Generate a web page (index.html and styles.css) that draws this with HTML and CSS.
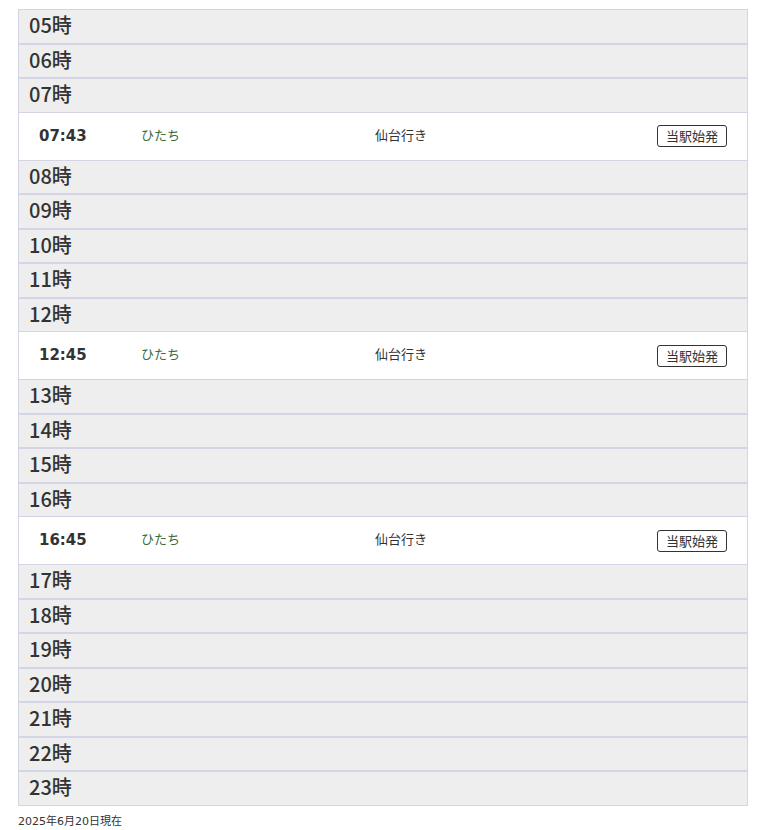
FILE: index.html
```html
<!DOCTYPE html>
<html lang="ja">
<head>
<meta charset="utf-8">
<link rel="stylesheet" href="styles.css">
</head>
<body>
<div class="table">
  <div class="hour">05時</div>
  <div class="hour">06時</div>
  <div class="hour">07時</div>
  <div class="train"><span class="time">07:43</span><span class="name">ひたち</span><span class="dest">仙台行き</span><span class="badge">当駅始発</span></div>
  <div class="hour">08時</div>
  <div class="hour">09時</div>
  <div class="hour">10時</div>
  <div class="hour">11時</div>
  <div class="hour">12時</div>
  <div class="train"><span class="time">12:45</span><span class="name">ひたち</span><span class="dest">仙台行き</span><span class="badge">当駅始発</span></div>
  <div class="hour">13時</div>
  <div class="hour">14時</div>
  <div class="hour">15時</div>
  <div class="hour">16時</div>
  <div class="train"><span class="time">16:45</span><span class="name">ひたち</span><span class="dest">仙台行き</span><span class="badge">当駅始発</span></div>
  <div class="hour">17時</div>
  <div class="hour">18時</div>
  <div class="hour">19時</div>
  <div class="hour">20時</div>
  <div class="hour">21時</div>
  <div class="hour">22時</div>
  <div class="hour">23時</div>
</div>
<p class="note">2025年6月20日現在</p>
</body>
</html>
```
FILE: styles.css
```css
html, body {
  margin: 0;
  padding: 0;
  background: #fff;
}
body {
  padding: 9px 14px 0 18px;
  font-family: "DejaVu Sans", "Noto Sans CJK JP", sans-serif;
  color: #333;
}
.table {
  border-left: 1px solid #d4d4e6;
  border-right: 1px solid #d4d4e6;
}
.hour {
  background: #eeeeee;
  border-top: 1px solid #d4d4e6;
  border-bottom: 1px solid #d4d4e6;
  height: 32.5px;
  line-height: 30px;
  padding-left: 10px;
  font-family: "Noto Sans CJK JP", sans-serif;
  font-size: 20px;
  font-weight: 500;
  color: #333;
}
.train {
  display: grid;
  grid-template-columns: 102px 234px 1fr auto;
  align-items: center;
  height: 47px;
  padding: 0 20px;
  background: #fff;
}
.time {
  font-size: 15px;
  font-weight: bold;
  color: #333;
  line-height: 20px;
  margin-bottom: 1px;
}
.name {
  font-family: "Noto Sans CJK JP", sans-serif;
  font-size: 13px;
  color: #3e6b3e;
  line-height: 20px;
  margin-bottom: 3px;
}
.dest {
  font-family: "Noto Sans CJK JP", sans-serif;
  font-size: 13px;
  color: #333;
  line-height: 20px;
  margin-bottom: 3px;
}
.badge {
  font-family: "Noto Sans CJK JP", sans-serif;
  font-size: 13px;
  line-height: 20px;
  padding: 0 8px;
  border: 1px solid #333;
  border-radius: 3px;
  color: #333;
}
.note {
  margin: 6px 0 0;
  font-size: 11px;
  color: #333;
}
```
